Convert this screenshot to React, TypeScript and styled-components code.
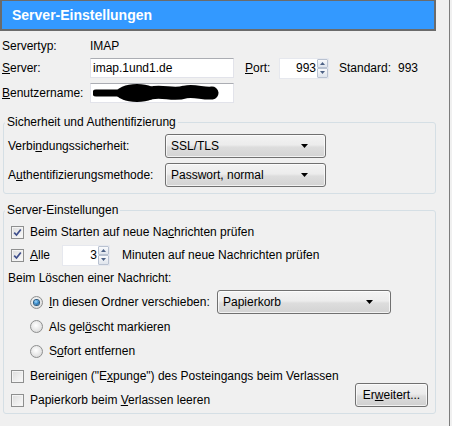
import styled, { createGlobalStyle } from "styled-components";

const GlobalStyle = createGlobalStyle`
    html, body {
        margin: 0;
        padding: 0;
        background: #f0f0f0;
    }
    body {
        font-family: "Liberation Sans", Arial, sans-serif;
        font-size: 12px;
        color: #000;
    }
`;

const Page = styled.div`
    width: 450px;
    height: 426px;
    box-sizing: border-box;
    border-right: 1px solid #7c7c7c;
`;

const Header = styled.h1`
    margin: 0;
    width: 436px;
    height: 31px;
    box-sizing: border-box;
    border: 2px solid #6b6b6b;
    border-top-width: 1px;
    background: #3399ff;
    color: #fff;
    font-size: 14px;
    font-weight: bold;
    display: flex;
    align-items: center;
    padding-left: 10px;
`;

const ServerGrid = styled.div`
    display: grid;
    grid-template-columns: 88px 1fr;
    grid-template-rows: 21px 24px 25px;
    align-items: center;
    padding: 4px 0 0 2px;
`;

const Line = styled.div`
    display: flex;
    align-items: center;
`;

const Key = styled.span`
    text-decoration: underline;
`;

const TextBox = styled.div<{ $w: number }>`
    width: ${(p) => p.$w}px;
    height: 20px;
    box-sizing: border-box;
    background: #fff;
    border: 1px solid #e2e3ea;
    border-top-color: #abadb3;
    padding-left: 2px;
    display: flex;
    align-items: center;
    overflow: hidden;
`;

const PortLabel = styled.span`
    width: 34px;
    margin-left: 11px;
`;

const StandardLabel = styled.span`
    width: 59px;
    margin-left: 10px;
`;

const Spin = styled.div`
    display: inline-flex;
    height: 21px;
`;

const SpinField = styled.div<{ $w: number }>`
    width: ${(p) => p.$w}px;
    box-sizing: border-box;
    background: #fff;
    border: 1px solid #e6e8ee;
    border-right: none;
    text-align: right;
    padding-right: 1px;
    line-height: 19px;
`;

const SpinButtons = styled.div`
    width: 11px;
    display: flex;
    flex-direction: column;
    border: 1px solid #e6e8ee;
    border-left: none;
    background: #fff;
`;

const SpinCell = styled.div`
    flex: 1;
    display: flex;
    align-items: center;
    justify-content: center;
    border: 1px solid #b9c2d1;
    border-radius: 1px;
    background: linear-gradient(#f9fafc, #dfe4ec);
`;

const Group = styled.fieldset<{ $top: number; $pad: string }>`
    margin: ${(p) => p.$top}px 0 0 3px;
    width: 433px;
    box-sizing: border-box;
    border: 1px solid #d5dfe5;
    border-radius: 3px;
    padding: ${(p) => p.$pad};
    min-inline-size: auto;
`;

const Legend = styled.legend`
    padding: 0 2px;
    margin-left: -3px;
    line-height: 16px;
`;

const FieldRow = styled.div`
    display: grid;
    grid-template-columns: 157px 161px;
    align-items: center;
    height: 24px;
    & + & {
        margin-top: 5px;
    }
`;

const Select = styled.div<{ $w?: number }>`
    width: ${(p) => (p.$w ? `${p.$w}px` : "auto")};
    height: 24px;
    box-sizing: border-box;
    border: 1px solid #707070;
    border-radius: 3px;
    background: linear-gradient(#f3f3f3 0%, #ececec 45%, #dddddd 55%, #d3d3d3 100%);
    box-shadow: inset 0 0 0 1px rgba(255, 255, 255, 0.7);
    display: flex;
    align-items: center;
    justify-content: space-between;
    padding: 0 17px 0 5px;
`;

const OptionRow = styled.div<{ $h: number; $indent?: number }>`
    display: flex;
    align-items: center;
    height: ${(p) => p.$h}px;
    padding-left: ${(p) => p.$indent ?? 3}px;
`;

const Box = styled.span`
    width: 13px;
    height: 13px;
    box-sizing: border-box;
    border: 1px solid #8e8f8f;
    background: linear-gradient(135deg, #dcdcdc, #fbfbfb);
    box-shadow: inset 0 0 0 1px #f4f4f4;
    margin-right: 6px;
    flex-shrink: 0;
    display: flex;
    align-items: center;
    justify-content: center;
`;

const Radio = styled.span<{ $on?: boolean }>`
    width: 13px;
    height: 13px;
    box-sizing: border-box;
    border-radius: 50%;
    border: 1px solid #8e8f8f;
    background: radial-gradient(circle at 45% 40%, #ffffff 0%, #e4e4e4 60%, #cfcfcf 100%);
    margin-right: 6px;
    flex-shrink: 0;
    display: flex;
    align-items: center;
    justify-content: center;
    &::after {
        content: "";
        display: ${(p) => (p.$on ? "block" : "none")};
        width: 5px;
        height: 5px;
        border-radius: 50%;
        background: radial-gradient(circle at 40% 35%, #a9dcfb 0%, #3a8fd0 45%, #13406c 100%);
        box-shadow: 0 0 0 1px #28597f;
    }
`;

const AlleLabel = styled.span`
    width: 32px;
`;

const Minutes = styled.span`
    margin-left: 12px;
`;

const MoveLabel = styled.span`
    width: 168px;
`;

const Footer = styled.div`
    display: flex;
    justify-content: space-between;
    align-items: flex-end;
`;

const Button = styled.div`
    width: 73px;
    height: 24px;
    box-sizing: border-box;
    margin-bottom: 4px;
    border: 1px solid #707070;
    border-radius: 3px;
    background: linear-gradient(#f2f2f2 0%, #ebebeb 45%, #dddddd 55%, #cfcfcf 100%);
    box-shadow: inset 0 0 0 1px rgba(255, 255, 255, 0.7);
    display: flex;
    align-items: center;
    justify-content: center;
`;

function Arrow() {
    return (
        <svg width="7" height="4" viewBox="0 0 7 4">
            <polygon points="0,0 7,0 3.5,4" fill="#000" />
        </svg>
    );
}

function Check() {
    return (
        <svg width="9" height="9" viewBox="0 0 9 9">
            <path
                d="M1.2 4.6 L3.5 7 L7.8 1.4"
                fill="none"
                stroke="#3f4f8c"
                strokeWidth="1.7"
            />
        </svg>
    );
}

function Checkbox({ checked }: { checked?: boolean }) {
    return <Box>{checked ? <Check /> : null}</Box>;
}

function SpinBox({ value, width }: { value: string; width: number }) {
    return (
        <Spin>
            <SpinField $w={width}>{value}</SpinField>
            <SpinButtons>
                <SpinCell>
                    <svg width="5" height="3" viewBox="0 0 5 3">
                        <polygon points="0,3 5,3 2.5,0" fill="#4d6185" />
                    </svg>
                </SpinCell>
                <SpinCell>
                    <svg width="5" height="3" viewBox="0 0 5 3">
                        <polygon points="0,0 5,0 2.5,3" fill="#4d6185" />
                    </svg>
                </SpinCell>
            </SpinButtons>
        </Spin>
    );
}

// blacked-out user name
function Scribble() {
    return (
        <svg width="126" height="18" viewBox="0 0 126 18">
            <path d="M3 9 L26 9" stroke="#000" strokeWidth="7" strokeLinecap="round" />
            <ellipse cx="44" cy="9" rx="21" ry="9" fill="#000" />
            <path
                d="M58 9 C70 6 80 12 92 8 C102 6 110 10 119 9"
                stroke="#000"
                strokeWidth="13"
                strokeLinecap="round"
                fill="none"
            />
        </svg>
    );
}

export default function App() {
    return (
        <>
            <GlobalStyle />
            <Page>
                <Header>Server-Einstellungen</Header>
                <ServerGrid>
                    <span>Servertyp:</span>
                    <span>IMAP</span>
                    <span>
                        <Key>S</Key>erver:
                    </span>
                    <Line>
                        <TextBox $w={144}>imap.1und1.de</TextBox>
                        <PortLabel>
                            <Key>P</Key>ort:
                        </PortLabel>
                        <SpinBox value="993" width={38} />
                        <StandardLabel>Standard:</StandardLabel>
                        <span>993</span>
                    </Line>
                    <span>
                        <Key>B</Key>enutzername:
                    </span>
                    <TextBox $w={144}>
                        <Scribble />
                    </TextBox>
                </ServerGrid>

                <Group $top={9} $pad="4px 4px 6px 4px">
                    <Legend>Sicherheit und Authentifizierung</Legend>
                    <FieldRow>
                        <span>
                            Verbi<Key>n</Key>dungssicherheit:
                        </span>
                        <Select>
                            SSL/TLS
                            <Arrow />
                        </Select>
                    </FieldRow>
                    <FieldRow>
                        <span>
                            A<Key>u</Key>thentifizierungsmethode:
                        </span>
                        <Select>
                            Passwort, normal
                            <Arrow />
                        </Select>
                    </FieldRow>
                </Group>

                <Group $top={8} $pad="2px 7px 2px 4px">
                    <Legend>Server-Einstellungen</Legend>
                    <OptionRow $h={24}>
                        <Checkbox checked />
                        <span>
                            Beim Starten auf neue Na<Key>c</Key>hrichten prüfen
                        </span>
                    </OptionRow>
                    <OptionRow $h={22}>
                        <Checkbox checked />
                        <AlleLabel>
                            <Key>A</Key>lle
                        </AlleLabel>
                        <SpinBox value="3" width={36} />
                        <Minutes>Minuten auf neue Nachrichten prüfen</Minutes>
                    </OptionRow>
                    <OptionRow $h={24} $indent={0}>
                        Beim Löschen einer Nachricht:
                    </OptionRow>
                    <OptionRow $h={24} $indent={22}>
                        <Radio $on />
                        <MoveLabel>
                            <Key>I</Key>n diesen Ordner verschieben:
                        </MoveLabel>
                        <Select $w={174}>
                            Papierkorb
                            <Arrow />
                        </Select>
                    </OptionRow>
                    <OptionRow $h={25} $indent={22}>
                        <Radio />
                        <span>
                            Als gel<Key>ö</Key>scht markieren
                        </span>
                    </OptionRow>
                    <OptionRow $h={24} $indent={22}>
                        <Radio />
                        <span>
                            S<Key>o</Key>fort entfernen
                        </span>
                    </OptionRow>
                    <Footer>
                        <div>
                            <OptionRow $h={26}>
                                <Checkbox />
                                <span>
                                    Bereinigen ("E<Key>x</Key>punge") des
                                    Posteingangs beim Verlassen
                                </span>
                            </OptionRow>
                            <OptionRow $h={22}>
                                <Checkbox />
                                <span>
                                    Papierkorb beim <Key>V</Key>erlassen leeren
                                </span>
                            </OptionRow>
                        </div>
                        <Button>
                            <span>
                                Er<Key>w</Key>eitert...
                            </span>
                        </Button>
                    </Footer>
                </Group>
            </Page>
        </>
    );
}
